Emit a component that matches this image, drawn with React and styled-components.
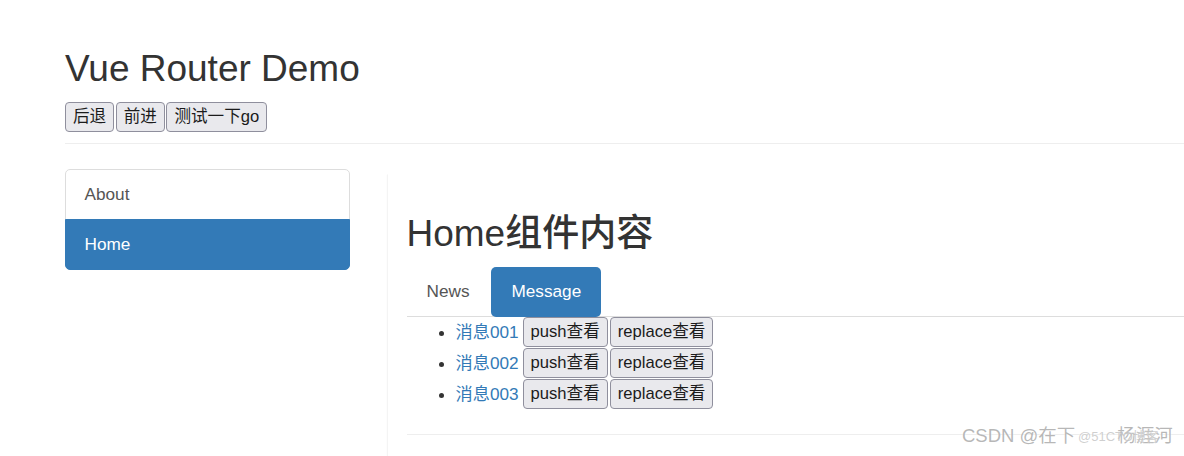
import React from "react";
import styled, { createGlobalStyle } from "styled-components";

const GlobalStyle = createGlobalStyle`
  html, body {
    margin: 0;
    padding: 0;
    background: #fff;
    overflow: hidden;
  }
  body {
    font-family: "Liberation Sans", "Noto Sans CJK SC", sans-serif;
    font-size: 17.2px;
    line-height: 24.6px;
    color: #333;
  }
  * { box-sizing: border-box; }
`;

const Page = styled.div`
  position: relative;
  padding: 49px 0 0 65px;
  height: 456px;
`;

const PageHeader = styled.div`
  padding-bottom: 11px;
  border-bottom: 1px solid #eee;
  margin-bottom: 24.6px;
`;

const Heading = styled.h2`
  margin: ${(p) => (p.$inner ? "25.6px 0 12.3px" : "0 0 12.3px")};
  font-size: 37px;
  line-height: 40.7px;
  font-weight: 500;
  color: #333;
`;

const Toolbar = styled.div`
  display: flex;
  gap: 1.5px;
`;

const Btn = styled.button`
  display: inline-block;
  height: 30px;
  margin: 0;
  padding: 0 7px;
  font-family: "Liberation Sans", "Noto Sans CJK SC", sans-serif;
  font-size: 16.6px;
  line-height: 28px;
  color: #1b1b1b;
  background: #e9e9ed;
  border: 1px solid #8f8f9d;
  border-radius: 4px;
  vertical-align: top;
  cursor: pointer;
`;

const Row = styled.div`
  display: flex;
  align-items: flex-start;
`;

const SideCol = styled.div`
  width: 285px;
  flex: none;
  margin-right: 37px;
`;

const ListGroup = styled.div`
  display: flex;
  flex-direction: column;
`;

const ListItem = styled.a`
  display: block;
  padding: 12.3px 18.5px;
  margin-bottom: -1px;
  border: 1px solid ${(p) => (p.$active ? "#337ab7" : "#ddd")};
  background: ${(p) => (p.$active ? "#337ab7" : "#fff")};
  color: ${(p) => (p.$active ? "#fff" : "#555")};
  text-decoration: none;
  &:first-child {
    border-top-left-radius: 5px;
    border-top-right-radius: 5px;
  }
  &:last-child {
    margin-bottom: 0;
    border-bottom-left-radius: 5px;
    border-bottom-right-radius: 5px;
  }
`;

const MainCol = styled.div`
  flex: 1;
  min-width: 0;
  padding-top: 5px;
`;

const Panel = styled.div`
  background: #fff;
  border: 1px solid transparent;
  border-left: 1px solid #f4f4f4;
  border-right: none;
  box-shadow: 0 1px 1px rgba(0, 0, 0, 0.05);
  height: 400px;
`;

const PanelBody = styled.div`
  padding: 13.5px 0 18.5px 18.5px;
`;

const Tabs = styled.ul`
  display: flex;
  list-style: none;
  margin: 0;
  padding: 0;
  border-bottom: 1px solid #ddd;
`;

const TabItem = styled.li`
  margin-bottom: -1px;
  & + & {
    margin-left: 2px;
  }
`;

const TabLink = styled.a`
  display: block;
  padding: 12.3px 20px 13.3px;
  border-radius: 5px;
  text-decoration: none;
  background: ${(p) => (p.$active ? "#337ab7" : "transparent")};
  color: ${(p) => (p.$active ? "#fff" : "#555")};
`;

const MessageList = styled.ul`
  margin: 0 0 12.3px;
  padding-left: 49px;
`;

const MessageItem = styled.li`
  height: 31px;
  line-height: 31px;
  white-space: nowrap;
`;

const MsgLink = styled.a`
  color: #337ab7;
  text-decoration: none;
  margin-right: 4px;
  vertical-align: top;
`;

const BtnPair = styled.span`
  display: inline-flex;
  gap: 2px;
  vertical-align: top;
`;

const Rule = styled.hr`
  margin: 24.6px 0;
  border: 0;
  border-top: 1px solid #eee;
`;

const Watermark = styled.div`
  position: absolute;
  left: 962px;
  top: 424px;
  font-family: "Liberation Sans", "Noto Sans CJK SC", sans-serif;
  font-size: 18.5px;
  line-height: 24px;
  color: rgba(160, 160, 160, 0.75);
  text-shadow: 0 0 2px #fff;
  white-space: nowrap;
  pointer-events: none;
`;

const WatermarkGap = styled.span`
  display: inline-block;
  width: 42px;
`;

const WatermarkSmall = styled.span`
  position: absolute;
  left: 116px;
  top: 1px;
  font-size: 13px;
  color: rgba(175, 175, 175, 0.6);
`;

const messages = ["001", "002", "003"];

export default function App() {
  return (
    <>
      <GlobalStyle />
      <Page>
        <PageHeader>
          <Heading>Vue Router Demo</Heading>
          <Toolbar>
            <Btn>后退</Btn>
            <Btn>前进</Btn>
            <Btn>测试一下go</Btn>
          </Toolbar>
        </PageHeader>
        <Row>
          <SideCol>
            <ListGroup>
              <ListItem href="#">About</ListItem>
              <ListItem href="#" $active>
                Home
              </ListItem>
            </ListGroup>
          </SideCol>
          <MainCol>
            <Panel>
              <PanelBody>
                <Heading $inner>Home组件内容</Heading>
                <Tabs>
                  <TabItem>
                    <TabLink href="#">News</TabLink>
                  </TabItem>
                  <TabItem>
                    <TabLink href="#" $active>
                      Message
                    </TabLink>
                  </TabItem>
                </Tabs>
                <MessageList>
                  {messages.map((id) => (
                    <MessageItem key={id}>
                      <MsgLink href="#">消息{id}</MsgLink>
                      <BtnPair>
                        <Btn>push查看</Btn>
                        <Btn>replace查看</Btn>
                      </BtnPair>
                    </MessageItem>
                  ))}
                </MessageList>
                <Rule />
              </PanelBody>
            </Panel>
          </MainCol>
        </Row>
        <Watermark>
          CSDN @在下
          <WatermarkGap />
          杨涯河
          <WatermarkSmall>@51CTO博客</WatermarkSmall>
        </Watermark>
      </Page>
    </>
  );
}
